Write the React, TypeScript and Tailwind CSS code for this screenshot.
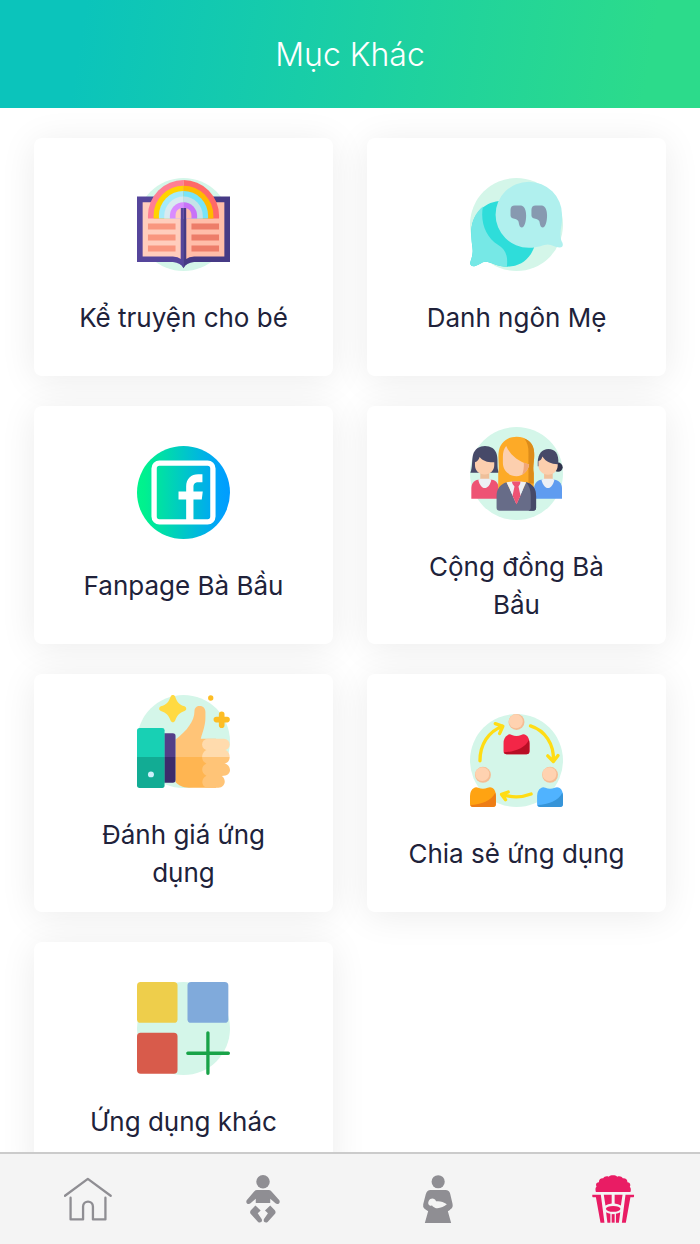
import type { ReactNode } from 'react';

const MINT = '#d4f6e9';

function BookIcon() {
  return (
    <svg viewBox="52 52 280 280" className="size-[93px]" aria-hidden="true">
      <circle cx="192" cy="192" r="140" fill={MINT} />
      <path d="M52 108H192V324Q184 307 160 305H52Z" fill="#55459b" />
      <path d="M332 108H192V324Q200 307 224 305H332Z" fill="#463a85" />
      <path d="M69 125H184V296Q176 289 160 288H69Z" fill="#ffcdbd" />
      <path d="M315 125H200V296Q208 289 224 288H315Z" fill="#ffbda9" />
      <path d="M85 174V165A107 107 0 0 1 192 58V174Z" fill="#ff7f93" />
      <path d="M299 174V165A107 107 0 0 0 192 58V174Z" fill="#ff6968" />
      <path d="M102 174V165A90 90 0 0 1 192 75V174Z" fill="#ffd400" />
      <path d="M282 174V165A90 90 0 0 0 192 75V174Z" fill="#ffba00" />
      <path d="M118 174V165A74 74 0 0 1 192 91V174Z" fill="#a4ebfb" />
      <path d="M266 174V165A74 74 0 0 0 192 91V174Z" fill="#78e4f8" />
      <path d="M134 174V166A58 58 0 0 1 192 108V174Z" fill="#d8eaf0" />
      <path d="M250 174V166A58 58 0 0 0 192 108V174Z" fill="#c5e1e8" />
      <path d="M151 174V166A41 41 0 0 1 192 125V174Z" fill="#d98cff" />
      <path d="M233 174V166A41 41 0 0 0 192 125V174Z" fill="#c873f8" />
      <path d="M168 174V165A24 24 0 0 1 184 142V174Z" fill="#ffcdbd" />
      <path d="M216 174V165A24 24 0 0 0 200 142V174Z" fill="#ffbda9" />
      <path d="M184 142H192V324L184 306Z" fill="#55459b" />
      <path d="M192 142H200V306L192 324Z" fill="#463a85" />
      <path d="M85 189h83v18H85zM85 222h83v18H85zM85 255h83v18H85z" fill="#f9967f" />
      <path d="M216 189h83v18h-83zM216 222h83v18h-83zM216 255h83v18h-83z" fill="#ed7d69" />
    </svg>
  );
}

function QuoteIcon() {
  return (
    <svg viewBox="61 52 280 280" className="size-[93px]" aria-hidden="true">
      <circle cx="201" cy="192" r="140" fill={MINT} />
      <path d="M148 121C100 126 65 165 65 215C65 250 70 260 69 275C68 290 64 298 62 306C60 316 68 320 77 317C90 312 97 305 106 304C120 302 142 319 174 319C212 318 240 298 254 261Z" fill="#2eddda" />
      <path d="M100 138C78 155 65 183 65 215C65 250 70 260 69 275C68 290 64 298 62 306C60 316 68 320 77 317C90 312 97 305 106 304C120 302 142 319 172 319C176 284 167 266 145 253C109 231 91 185 100 138Z" fill="#76e8e6" />
      <path d="M238 63A100 99.500 0 1 0 238 262C268 262 282 252 295 252C308 252 317 261 331 261C341 261 342 254 339 246C332 234 332 220 337 190C339 175 338 170 338 162A100 99 0 0 0 238 63Z" fill="#b0f0ee" />
      <path id="mark" d="M196 135H215C226 137 230 151 230 165C230 183 225 201 217 201C209 201 209 190 207 183C205 176 196 175 189 173C183 171 183 166 183 161V148Q183 135 196 135Z" fill="#8799b0" />
      <use href="#mark" x="63" />
    </svg>
  );
}

function FanpageIcon() {
  return (
    <svg viewBox="52 44 280 280" className="size-[93px]" aria-hidden="true">
      <defs>
        <linearGradient id="fan" x1="0" x2="1" y1="0" y2="0">
          <stop offset="0" stopColor="#00f48d" />
          <stop offset="0.08" stopColor="#00f18e" />
          <stop offset="0.88" stopColor="#00a3fa" />
          <stop offset="1" stopColor="#009cff" />
        </linearGradient>
      </defs>
      <circle cx="192" cy="184" r="140" fill="url(#fan)" />
      <rect x="103.500" y="95.500" width="177" height="177" rx="16" fill="none" stroke="#fff" strokeWidth="16" />
      <path d="M200 270V205H177V181H200V166C200 142 215 129 236 129H249V153H237C226 153 222 158 222 168V181H250L247 205H222V270Z" fill="#fff" />
    </svg>
  );
}

function CommunityIcon() {
  return (
    <svg viewBox="61 33 280 280" className="size-[93px]" aria-hidden="true">
      <circle cx="201" cy="173" r="140" fill={MINT} />
      <path d="M62 171C69 155 66 132 70 117C75 98 91 90 106 90C122 90 138 98 142 117C146 134 141 155 148 171Z" fill="#464968" />
      <path d="M92 165H119V195H92Z" fill="#eebf9a" />
      <path d="M76 139Q87 135 90 123C99 135 116 140 134 139V148C134 164 121 176 105 176C89 176 76 164 76 148Z" fill="#fccfae" />
      <path d="M65 249V217C65 201 76 191 92 191H120C137 191 147 201 147 217V249Z" fill="#ee5374" />
      <path d="M86 192Q91 189 94 189H118Q122 190 125 192C122 208 114 217 105 217C97 217 89 207 86 192Z" fill="#edf0f5" />
      <circle cx="326" cy="154" r="14" fill="#30334c" />
      <path d="M265 138C265 115 278 99 297 99C318 99 328 114 327 141L324 151H265Z" fill="#464968" />
      <path d="M284 165H310V195H284Z" fill="#f0c09a" />
      <path d="M267 136Q276 134 279 122C289 138 306 145 325 145V149C325 165 312 177 296 177C280 177 267 165 267 150Z" fill="#fccfae" />
      <path d="M254 249V216C255 201 266 191 281 191H311C327 191 338 202 338 217V249Z" fill="#5f9cf0" />
      <path d="M276 192L284 189H309L315 192C312 207 304 217 296 217C287 217 280 207 276 192Z" fill="#edf0f5" />
      <path d="M146 222V172C150 150 145 132 147 111C150 80 174 62 201 62C230 62 252 80 254 109C256 134 249 149 253 172V222Z" fill="#fdaa27" />
      <path d="M224 67C245 75 254 92 254 109C256 134 249 149 253 172V203H237V112C238 94 233 78 224 67Z" fill="#dd8c1a" />
      <path d="M160 123C160 110 163 98 170 90C179 112 203 137 239 146C236 166 220 181 201 181C177 181 160 163 160 141Z" fill="#fccfae" />
      <path d="M223 140L239 146C237 161 228 172 218 177C222 166 224 154 223 140Z" fill="#f1a777" />
      <path d="M141 276V241C141 218 153 205 171 199L201 265L230 199C248 203 260 217 260 241V276Q260 285 251 285H150Q141 285 141 276Z" fill="#676c88" />
      <path d="M230 199C250 204 260 218 260 241V276Q260 285 251 285H237Q244 283 244 276V239C244 223 239 210 230 199Z" fill="#464968" />
      <path d="M171 199L189 197H213L230 199L201 265Z" fill="#edf0f5" />
      <path d="M187 197H213Q213 207 207 212L213 240L201 266L189 240L195 212Q188 207 187 197Z" fill="#ee5374" />
    </svg>
  );
}

function ThumbIcon() {
  return (
    <svg viewBox="52 26 280 280" className="size-[93px]" aria-hidden="true">
      <circle cx="192" cy="166" r="140" fill={MINT} />
      <path d="M153 31C156 24 164 24 167 31C172 47 180 55 195 60C202 63 202 72 195 74C180 79 172 88 167 103C164 110 156 110 153 103C148 88 140 79 124 74C117 72 117 63 124 60C140 55 148 47 153 31Z" fill="#ffda42" />
      <circle cx="274" cy="35" r="8" fill="#fdbd25" />
      <path d="M307 84V117M291 100H323" stroke="#fdbd25" strokeWidth="17" strokeLinecap="round" />
      <path d="M168 160C202 134 225 105 225 75C225 65 231 59 241 59C252 59 258 67 258 77V94C258 118 250 136 244 158H290V213H168Z" fill="#ffc477" />
      <path d="M168 213H290V305H208C189 305 177 298 168 288Z" fill="#ffb551" />
      <rect x="248" y="158" width="83" height="34" rx="17" fill="#ffdbad" />
      <path d="M265 191H315C325 191 331 203 331 213H248C248 203 255 191 265 191Z" fill="#ffdbad" />
      <path d="M248 213H331C331 223 325 232 315 232C325 234 332 242 332 252C332 262 325 270 307 270C323 280 317 305 297 305H265C245 305 243 277 261 269C244 260 244 240 261 232C252 229 248 222 248 213Z" fill="#ffc477" />
      <path d="M134 141H160Q168 141 168 149V213H134Z" fill="#533f88" />
      <path d="M134 213H168V282Q168 290 160 290H134Z" fill="#3c2b6b" />
      <path d="M60 125H128Q135 125 135 132V213H52V133Q52 125 60 125Z" fill="#18d0b4" />
      <path d="M52 213H135V298Q135 306 128 306H60Q52 306 52 298Z" fill="#12ac94" />
      <circle cx="94" cy="265" r="9" fill="#cdf0fb" />
    </svg>
  );
}

function Person({ x, y, light, dark }: { x: number; y: number; light: string; dark: string }) {
  return (
    <g transform={`translate(${x} ${y})`}>
      <circle cx="39" cy="24" r="24" fill="#f5bd94" />
      <circle cx="37" cy="22" r="21" fill="#ffd2b0" />
      <path d="M12 64Q17 59 25 63Q39 69 53 63Q61 59 68 64Q78 71 78 88V112Q78 121 69 121H9Q0 121 0 112V88Q0 71 12 64Z" fill={light} />
      <path d="M76 78Q78 84 78 88V112Q78 121 69 121H9Q3 121 1 115C33 114 65 102 76 78Z" fill={dark} />
    </g>
  );
}

function ShareIcon() {
  return (
    <svg viewBox="61 38 280 280" className="size-[93px]" aria-hidden="true">
      <circle cx="201" cy="178" r="140" fill={MINT} />
      <g fill="none" stroke="#ffdc14" strokeWidth="10" strokeLinecap="round" strokeLinejoin="round">
        <path d="M91 179C91 130 116 91 159 75M137 67L160 75L150 97" />
        <path d="M243 74C287 88 315 129 312 180M295 164L312 181L326 163" />
        <path d="M245 279C219 289 187 290 157 280M176 273L156 280L168 296" />
      </g>
      <Person x={162} y={38} light="#f32647" dark="#b80e25" />
      <Person x={61} y={197} light="#ffa312" dark="#ed7d16" />
      <Person x={263} y={197} light="#50b3ff" dark="#3694d8" />
    </svg>
  );
}

function AppsIcon() {
  return (
    <svg viewBox="52 44 280 280" className="size-[93px]" aria-hidden="true">
      <circle cx="192" cy="184" r="140" fill={MINT} />
      <rect x="52" y="44" width="122" height="123" rx="11" fill="#eece4b" />
      <rect x="204" y="44" width="123" height="123" rx="11" fill="#80aadb" />
      <rect x="52" y="197" width="122" height="123" rx="11" fill="#d85b4b" />
      <path d="M265.500 197V319M205 258.500H327" stroke="#18a348" strokeWidth="10" strokeLinecap="round" />
    </svg>
  );
}

function HomeGlyph() {
  return (
    <svg viewBox="191 104 146 146" className="size-12" aria-hidden="true">
      <g fill="none" stroke="#8f8e93" strokeWidth="7" strokeLinecap="round" strokeLinejoin="round">
        <path d="M194 167L263.500 116L333 167" />
        <path d="M211 173V239H249V200C249 180 279 180 279 200V239H317V173" />
      </g>
    </svg>
  );
}

function BabyGlyph() {
  return (
    <svg viewBox="717 104 146 146" className="size-12" aria-hidden="true">
      <g fill="#8f8e93">
        <circle cx="790" cy="124.500" r="20.500" />
        <path d="M772 150H807Q812 150 816 154L839 180C845 188 835 196 828 190L812 176V189H768V176L752 190C745 196 735 188 741 180L763 154Q767 150 772 150Z" />
        <path d="M767 197L783 212L774 220L786 238C790 246 781 252 775 247L753 223C750 219 750 215 753 211Z" />
        <path d="M812 197L796 212L805 220L793 238C789 246 798 252 804 247L826 223C829 219 829 215 826 211Z" />
      </g>
    </svg>
  );
}

function MotherGlyph() {
  return (
    <svg viewBox="191 104 146 146" className="size-12" aria-hidden="true">
      <circle cx="264.500" cy="124.500" r="20" fill="#8f8e93" />
      <path d="M241 150H287Q298 150 301 161L308 191C310 201 308 205 299 211L294 214L304 250H224L234 214L223 207Q217 202 219 193L227 162Q231 150 241 150Z" fill="#8f8e93" />
      <path d="M258 184C270 182 280 186 291 193C282 201 267 207 256 204C250 202 248 200 246 197C235 199 232 190 236 182C241 173 255 174 258 184Z" fill="#f4f4f4" />
    </svg>
  );
}

function PopcornGlyph() {
  return (
    <svg viewBox="716 104 146 146" className="size-12" aria-hidden="true">
      <g fill="#e91c64">
        <path d="M737 156C735 149 735 143 739 140C735 132 739 126 746 126C746 118 752 113 759 114C762 108 770 106 776 109C782 103 796 103 802 109C809 106 816 109 819 114C827 113 833 118 833 126C840 126 844 133 840 140C844 144 844 150 842 156Z" />
        <path d="M726 164H752L763 249H751L737 172H728Q726 172 726 169Z" />
        <path d="M853 164H827L816 249H828L842 172H851Q853 172 853 169Z" />
        <path d="M761 164H785V191Q774 192 766 197Z" />
        <path d="M818 164H794V191Q805 192 813 197Z" />
        <ellipse cx="789.500" cy="207" rx="22" ry="9" />
        <path d="M768 217Q775 221 781 222V249H772Z" />
        <path d="M785 223H794V249H785Z" />
        <path d="M811 217Q804 221 798 222V249H807Z" />
      </g>
    </svg>
  );
}

const cards: { label: string; icon: ReactNode }[] = [
  { label: 'Kể truyện cho bé', icon: <BookIcon /> },
  { label: 'Danh ngôn Mẹ', icon: <QuoteIcon /> },
  { label: 'Fanpage Bà Bầu', icon: <FanpageIcon /> },
  { label: 'Cộng đồng Bà Bầu', icon: <CommunityIcon /> },
  { label: 'Đánh giá ứng dụng', icon: <ThumbIcon /> },
  { label: 'Chia sẻ ứng dụng', icon: <ShareIcon /> },
  { label: 'Ứng dụng khác', icon: <AppsIcon /> },
];

const tabs: { label: string; icon: ReactNode }[] = [
  { label: 'Trang chủ', icon: <HomeGlyph /> },
  { label: 'Bé', icon: <BabyGlyph /> },
  { label: 'Mẹ', icon: <MotherGlyph /> },
  { label: 'Mục khác', icon: <PopcornGlyph /> },
];

export default function App() {
  return (
    <div className="flex h-screen flex-col bg-white font-['Inter','Noto_Sans',sans-serif] text-[#20223a]">
      <header className="flex h-[108px] shrink-0 items-center justify-center bg-[linear-gradient(99deg,#0bc4bb_12%,#2cdb8b_92%)] pt-0.5">
        <h1 className="text-[32px] leading-10 font-light text-white">Mục Khác</h1>
      </header>
      <main className="min-h-0 flex-1 overflow-y-auto px-[34px] py-[30px] [scrollbar-width:none]">
        <div className="grid grid-cols-2 gap-x-[34px] gap-y-[30px]">
          {cards.map((card) => (
            <button
              key={card.label}
              type="button"
              className="flex min-h-[238px] flex-col items-center justify-center gap-7 rounded-lg bg-white px-9 shadow-[0_4px_36px_rgba(0,0,0,0.08)]"
            >
              {card.icon}
              <span className="text-[26px] leading-[38px]">{card.label}</span>
            </button>
          ))}
        </div>
      </main>
      <nav className="grid h-[92px] shrink-0 grid-cols-4 border-t-2 border-[#cbcbcb] bg-[#f4f4f4]">
        {tabs.map((tab) => (
          <button key={tab.label} type="button" aria-label={tab.label} className="flex items-center justify-center">
            {tab.icon}
          </button>
        ))}
      </nav>
    </div>
  );
}
